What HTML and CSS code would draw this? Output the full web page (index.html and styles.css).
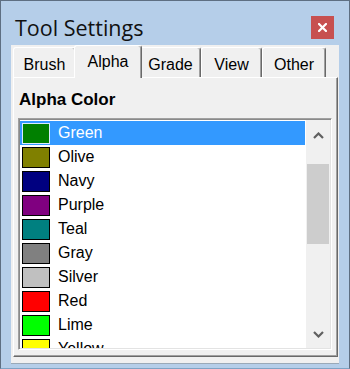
FILE: index.html
```html
<!DOCTYPE html>
<html lang="en">
<head>
    <meta charset="UTF-8">
    <title>Tool Settings</title>
    <link rel="stylesheet" href="styles.css">
</head>
<body>
    <div class="window">
        <header class="titlebar">
            <h1>Tool Settings</h1>
            <button class="close" aria-label="Close">
                <svg width="9" height="9" viewBox="0 0 9 9"><path d="M1 1 L8 8 M8 1 L1 8" stroke="#fff" stroke-width="2.2" stroke-linecap="square"/></svg>
            </button>
        </header>
        <main class="client">
            <div class="tabs">
                <div class="tab tab-brush">Brush</div>
                <div class="tab tab-alpha active">Alpha</div>
                <div class="tab tab-grade">Grade</div>
                <div class="tab tab-view">View</div>
                <div class="tab tab-other">Other</div>
            </div>
            <div class="page">
                <div class="group-label">Alpha Color</div>
                <div class="listbox">
                    <ul class="items" id="colorList"></ul>
                    <div class="scrollbar">
                        <div class="sb-btn up">
                            <svg width="11" height="7" viewBox="0 0 11 7"><path d="M1 6 L5.5 1.5 L10 6" fill="none" stroke="#606060" stroke-width="2.2"/></svg>
                        </div>
                        <div class="thumb"></div>
                        <div class="sb-space"></div>
                        <div class="sb-btn down">
                            <svg width="11" height="7" viewBox="0 0 11 7"><path d="M1 1 L5.5 5.5 L10 1" fill="none" stroke="#606060" stroke-width="2.2"/></svg>
                        </div>
                    </div>
                </div>
            </div>
        </main>
    </div>
    <script>
        const colors = [
            ["Green", "#008000"],
            ["Olive", "#808000"],
            ["Navy", "#000080"],
            ["Purple", "#800080"],
            ["Teal", "#008080"],
            ["Gray", "#808080"],
            ["Silver", "#c0c0c0"],
            ["Red", "#ff0000"],
            ["Lime", "#00ff00"],
            ["Yellow", "#ffff00"]
        ];
        const list = document.getElementById("colorList");

        colors.forEach(function (c, i) {
            const li = document.createElement("li");
            li.className = i === 0 ? "item selected" : "item";
            li.innerHTML = `<span class="swatch" style="background:${c[1]}"></span><span class="name">${c[0]}</span>`;
            list.appendChild(li);
        });
    </script>
</body>
</html>
```

FILE: styles.css
```css
html, body {
    margin: 0;
    padding: 0;
}

body {
    width: 350px;
    height: 369px;
    overflow: hidden;
    font-family: "Liberation Sans", Arial, sans-serif;
}

.window {
    box-sizing: border-box;
    width: 350px;
    height: 369px;
    background-color: #b5cee9;
    border: 1px solid #5e6f82;
    border-bottom-color: #7fa3c4;
}

.titlebar {
    display: flex;
    justify-content: space-between;
    align-items: flex-start;
    height: 44px;
}

.titlebar h1 {
    margin: 14px 0 0 14px;
    font-family: "Open Sans", "Noto Sans", sans-serif;
    font-weight: normal;
    font-size: 21.5px;
    line-height: 26px;
    color: #111;
}

.close {
    display: flex;
    align-items: center;
    justify-content: center;
    width: 23px;
    height: 23px;
    margin: 15px 15px 0 0;
    padding: 0;
    border: none;
    background-color: #c75050;
}

.client {
    box-sizing: border-box;
    width: 328px;
    height: 319px;
    margin-left: 10px;
    background-color: #f0f0f0;
    border-bottom: 1px solid #9aa9b8;
    overflow: hidden;
}

/* tab strip */
.tabs {
    display: flex;
    align-items: flex-end;
    height: 32px;
    padding-left: 2px;
}

.tab {
    box-sizing: border-box;
    height: 30px;
    padding-top: 8px;
    font-size: 16px;
    line-height: 18px;
    text-align: center;
    color: #000;
    background-color: #f0f0f0;
    border-top: 1px solid #fff;
    border-left: 1px solid #fff;
    border-right: 1px solid #696969;
    box-shadow: inset -1px 0 #a0a0a0;
    border-radius: 3px 3px 0 0;
}

.tab-brush { width: 63px; }
.tab-alpha { width: 64px; }
.tab-grade { width: 61px; }
.tab-view { width: 61px; }
.tab-other { width: 64px; }

.tab.active {
    position: relative;
    z-index: 1;
    width: 68px;
    height: 33px;
    margin: 0 -2px -1px -2px;
    padding-top: 7px;
}

/* tab page */
.page {
    box-sizing: border-box;
    width: 325px;
    height: 280px;
    margin-left: 2px;
    border-top: 1px solid #fff;
    border-left: 1px solid #fff;
    border-right: 1px solid #696969;
    border-bottom: 1px solid #696969;
    box-shadow: inset -1px -1px #a0a0a0;
}

.group-label {
    margin: 12px 0 0 5px;
    height: 20px;
    font-size: 17px;
    line-height: 20px;
    font-weight: bold;
}

.listbox {
    box-sizing: border-box;
    display: flex;
    width: 314px;
    height: 232px;
    margin: 8px 0 0 4px;
    background-color: #fff;
    border-top: 1px solid #a0a0a0;
    border-left: 1px solid #a0a0a0;
    border-right: 1px solid #fff;
    border-bottom: 1px solid #fff;
    box-shadow: inset 1px 1px #8a8a8a, inset -1px -1px #e3e3e3;
    padding: 1px;
}

.items {
    flex: 1;
    margin: 0;
    padding: 1px 1px 0 0;
    list-style: none;
    overflow: hidden;
}

.item {
    display: flex;
    align-items: flex-start;
    height: 24px;
    font-size: 16px;
    line-height: 24px;
    color: #000;
}

.item.selected {
    background-color: #3399ff;
    color: #fff;
}

.swatch {
    box-sizing: border-box;
    flex: none;
    width: 28px;
    height: 21px;
    margin: 2px 8px 0 2px;
    border: 1px solid #000;
}

.item.selected .swatch {
    border-color: #d8eaff;
}

.scrollbar {
    display: flex;
    flex-direction: column;
    width: 24px;
    background-color: #f0f0f0;
}

.sb-btn {
    display: flex;
    align-items: center;
    justify-content: center;
}

.sb-btn.up {
    height: 30px;
}

.sb-btn.down {
    height: 27px;
}

.thumb {
    height: 80px;
    margin: 14px 1px 0 1px;
    background-color: #cdcdcd;
}

.sb-space {
    flex: 1;
}
```
